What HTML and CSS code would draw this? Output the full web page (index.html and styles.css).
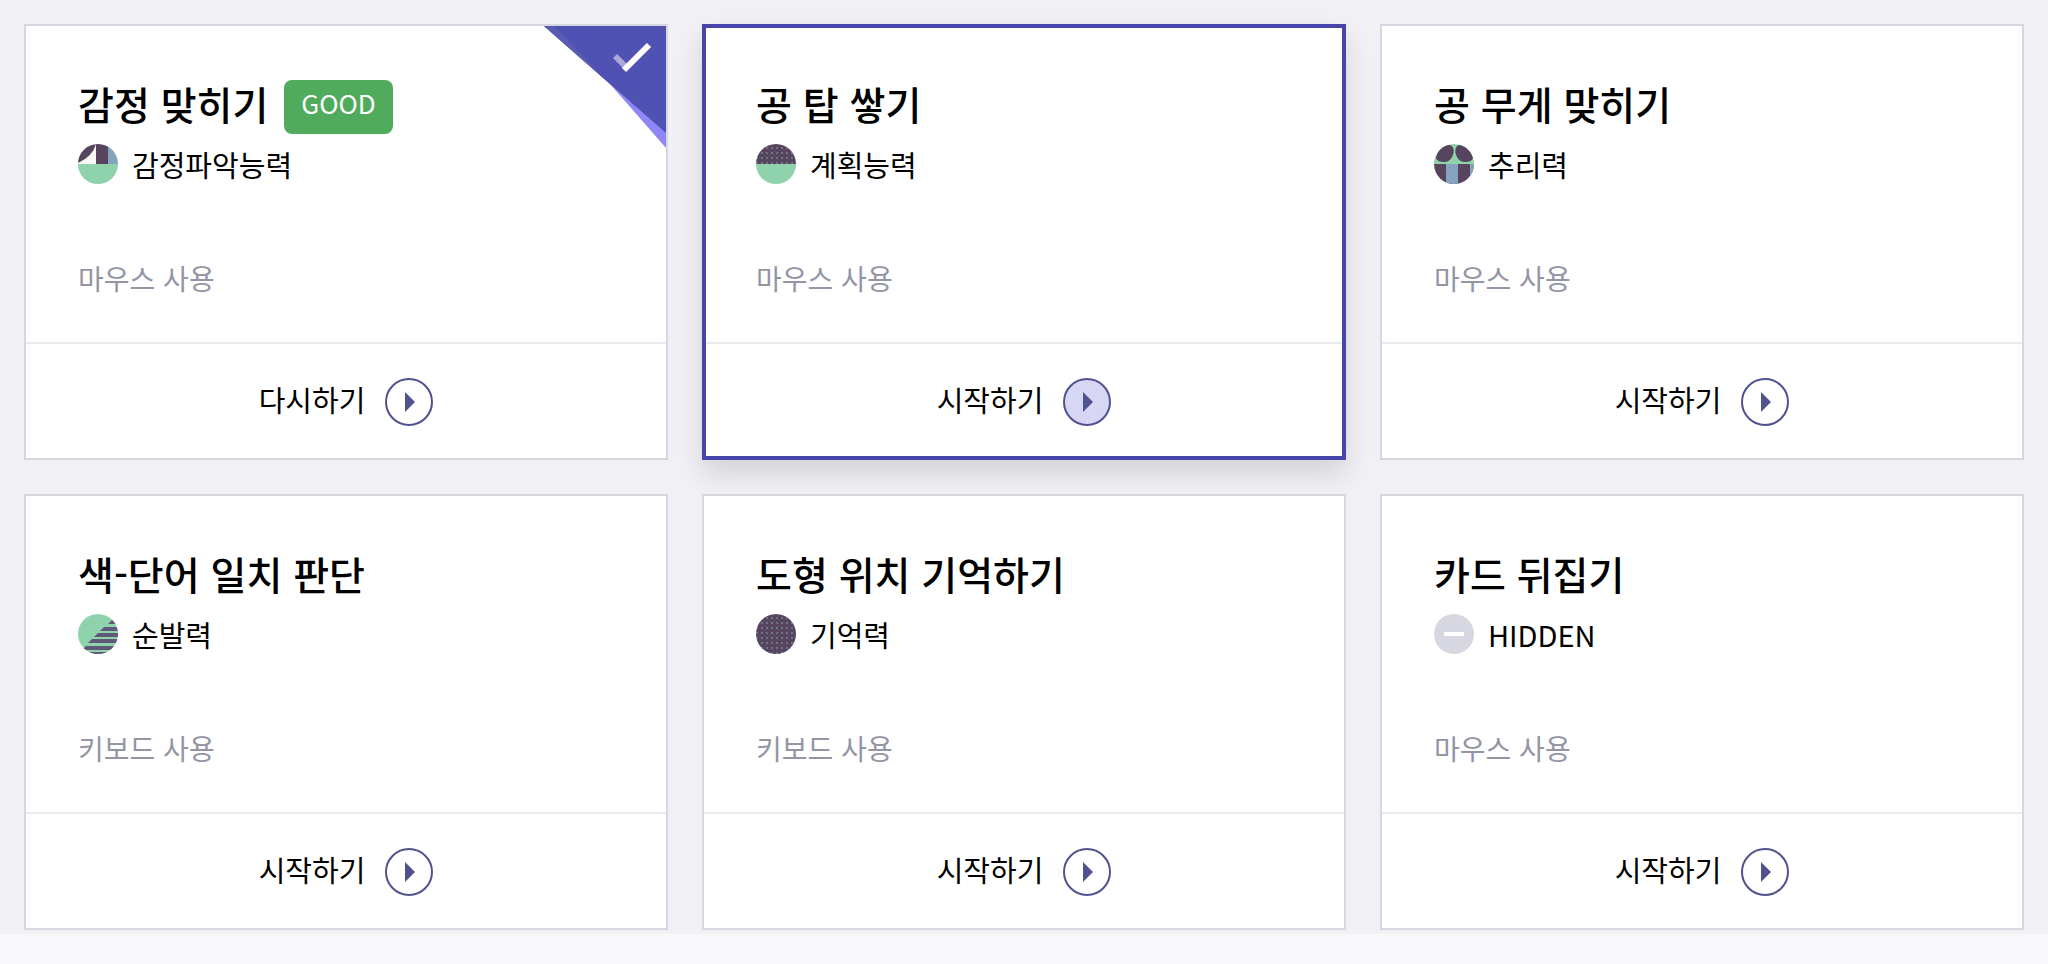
FILE: index.html
```html
<!DOCTYPE html>
<html lang="ko">
<head>
  <meta charset="UTF-8">
  <meta name="viewport" content="width=device-width, initial-scale=1.0">
  <title>게임 목록</title>
  <link rel="stylesheet" href="styles.css">
</head>
<body>
  <main class="game-list">
    <article class="card">
      <svg class="ribbon" viewBox="0 0 122 122" role="img" aria-label="완료">
        <path d="M0 0H122V122L66 58Z" fill="#9186f8"/>
        <path d="M0 0H122V107L66 58Z" fill="#5052b3"/>
        <path d="M0 0H10L54 46L66 58Z" fill="#5b5bb3"/>
        <path d="M71 30L82 41" stroke="#a9a8d9" stroke-width="6"/>
        <path d="M80 44L105 19" stroke="#fff" stroke-width="6"/>
      </svg>
      <div class="card-body">
        <h2 class="title">감정 맞히기 <span class="badge">GOOD</span></h2>
        <p class="ability">
          <svg class="icon" viewBox="0 0 40 40" aria-hidden="true">
            <rect width="40" height="40" fill="#f8f7f6"/>
            <path d="M0 0H18Q15 12 0 19Z" fill="#57455f"/>
            <rect x="18" width="12" height="20" fill="#57455f"/>
            <rect x="30" width="10" height="20" fill="#86a3bd"/>
            <rect y="20" width="40" height="20" fill="#8fd3ac"/>
          </svg>
          감정파악능력
        </p>
        <p class="device">마우스 사용</p>
      </div>
      <button class="start" type="button">다시하기
        <svg class="play" viewBox="0 0 48 48" aria-hidden="true"><circle cx="24" cy="24" r="23"/><path d="M20 14L30 24L20 34Z"/></svg>
      </button>
    </article>

    <article class="card active">
      <div class="card-body">
        <h2 class="title">공 탑 쌓기</h2>
        <p class="ability">
          <svg class="icon" viewBox="0 0 40 40" aria-hidden="true">
            <defs>
              <pattern id="dots" width="5" height="5" patternUnits="userSpaceOnUse">
                <rect width="5" height="5" fill="#57455f"/>
                <rect x="0" y="3" width="2" height="2" fill="#6b7486"/>
              </pattern>
            </defs>
            <rect width="40" height="20" fill="url(#dots)"/>
            <rect y="20" width="40" height="20" fill="#8fd3ac"/>
          </svg>
          계획능력
        </p>
        <p class="device">마우스 사용</p>
      </div>
      <button class="start" type="button">시작하기
        <svg class="play" viewBox="0 0 48 48" aria-hidden="true"><circle cx="24" cy="24" r="23"/><path d="M20 14L30 24L20 34Z"/></svg>
      </button>
    </article>

    <article class="card">
      <div class="card-body">
        <h2 class="title">공 무게 맞히기</h2>
        <p class="ability">
          <svg class="icon" viewBox="0 0 40 40" aria-hidden="true">
            <rect width="40" height="20" fill="#8fd3ac"/>
            <path d="M15 1C20 1 21 8 18 13C16 17 13 18 10 18C6 18 3 17 2 14C3 8 8 1 15 1Z" fill="#57455f"/>
            <path d="M26 1C21 1 20 8 23 13C25 17 28 18 31 18C35 18 38 17 39 14C38 8 33 1 26 1Z" fill="#57455f"/>
            <rect y="20" width="40" height="20" fill="#57455f"/>
            <rect x="12" y="20" width="12" height="20" fill="#86a3bd"/>
            <rect x="36" y="20" width="4" height="20" fill="#86a3bd"/>
          </svg>
          추리력
        </p>
        <p class="device">마우스 사용</p>
      </div>
      <button class="start" type="button">시작하기
        <svg class="play" viewBox="0 0 48 48" aria-hidden="true"><circle cx="24" cy="24" r="23"/><path d="M20 14L30 24L20 34Z"/></svg>
      </button>
    </article>

    <article class="card">
      <div class="card-body">
        <h2 class="title">색-단어 일치 판단</h2>
        <p class="ability">
          <svg class="icon" viewBox="0 0 40 40" aria-hidden="true">
            <rect width="40" height="40" fill="#8fd3ac"/>
            <path d="M34 6L40 10H30ZM26 13H40V17H22ZM20 19H40V23H16ZM14 25H40V29H10ZM8 32H40V36H4ZM0 38H40V40H0Z" fill="#5f5878"/>
          </svg>
          순발력
        </p>
        <p class="device">키보드 사용</p>
      </div>
      <button class="start" type="button">시작하기
        <svg class="play" viewBox="0 0 48 48" aria-hidden="true"><circle cx="24" cy="24" r="23"/><path d="M20 14L30 24L20 34Z"/></svg>
      </button>
    </article>

    <article class="card">
      <div class="card-body">
        <h2 class="title">도형 위치 기억하기</h2>
        <p class="ability">
          <svg class="icon" viewBox="0 0 40 40" aria-hidden="true">
            <rect width="40" height="40" fill="url(#dots)"/>
          </svg>
          기억력
        </p>
        <p class="device">키보드 사용</p>
      </div>
      <button class="start" type="button">시작하기
        <svg class="play" viewBox="0 0 48 48" aria-hidden="true"><circle cx="24" cy="24" r="23"/><path d="M20 14L30 24L20 34Z"/></svg>
      </button>
    </article>

    <article class="card">
      <div class="card-body">
        <h2 class="title">카드 뒤집기</h2>
        <p class="ability">
          <svg class="icon" viewBox="0 0 40 40" aria-hidden="true">
            <rect width="40" height="40" fill="#d7d7e1"/>
            <rect x="10" y="18" width="20" height="4" fill="#fff"/>
          </svg>
          HIDDEN
        </p>
        <p class="device">마우스 사용</p>
      </div>
      <button class="start" type="button">시작하기
        <svg class="play" viewBox="0 0 48 48" aria-hidden="true"><circle cx="24" cy="24" r="23"/><path d="M20 14L30 24L20 34Z"/></svg>
      </button>
    </article>
  </main>
</body>
</html>
```
FILE: styles.css
```css
* {
  box-sizing: border-box;
}
body {
  margin: 0;
  background-color: #f8f8fb;
  color: #000;
  font-family: "Noto Sans CJK KR", sans-serif;
}
.game-list {
  display: grid;
  grid-template-columns: repeat(3, 1fr);
  gap: 34px;
  padding: 24px 24px 4px;
  background-color: #f0f0f5;
}
.card {
  position: relative;
  border: 2px solid #d7d7e1;
  background-color: #fff;
}
.card.active {
  outline: 4px solid #4744ac;
  outline-offset: -4px;
  box-shadow: 0 14px 26px rgba(0, 0, 0, 0.12);
}
.card-body {
  padding: 54px 52px 42px;
}
.title {
  display: flex;
  align-items: flex-start;
  gap: 16px;
  min-height: 54px;
  margin: 0 0 8px;
  font-size: 39px;
  font-weight: 500;
  line-height: 46px;
}
.badge {
  padding: 0 17px 8px;
  border-radius: 8px;
  background-color: #50ac5c;
  color: #fff;
  font-size: 26px;
  font-weight: 400;
  line-height: 46px;
}
.ability {
  display: flex;
  align-items: center;
  gap: 14px;
  margin: 0 0 70px;
  font-size: 29px;
  line-height: 44px;
}
.icon {
  width: 40px;
  height: 40px;
  border-radius: 50%;
}
.device {
  margin: 0;
  color: #9395a5;
  font-size: 28px;
  line-height: 44px;
}
.start {
  display: flex;
  align-items: flex-start;
  justify-content: center;
  gap: 20px;
  width: 100%;
  padding: 34px 0 32px;
  border: 0;
  border-top: 2px solid #e9e9f0;
  background-color: transparent;
  color: #000;
  font-family: inherit;
  font-size: 29px;
  line-height: 42px;
  cursor: pointer;
}
.play {
  width: 48px;
  height: 48px;
  fill: #50528f;
}
.play circle {
  fill: none;
  stroke: #50528f;
  stroke-width: 2px;
}
.active .play circle,
.start:hover .play circle {
  fill: #d7d7f5;
}
/* check mark in the corner of a finished game */
.ribbon {
  position: absolute;
  top: 0;
  right: 0;
  width: 122px;
  height: 122px;
}
```
